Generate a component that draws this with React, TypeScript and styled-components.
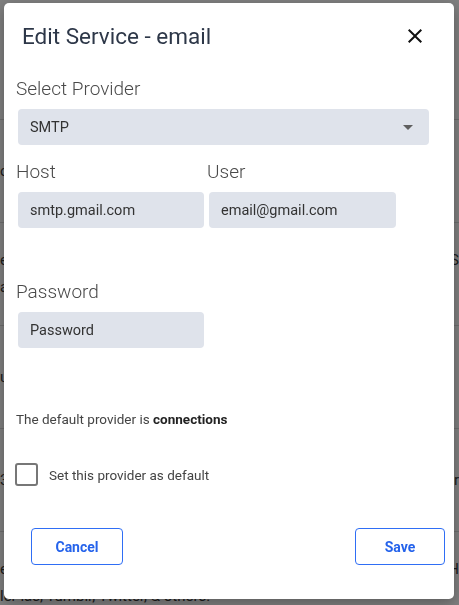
import React from "react";
import styled, { createGlobalStyle } from "styled-components";

const Global = createGlobalStyle`
  html, body { margin: 0; padding: 0; }
  body {
    background: #ffffff;
    font-family: Roboto, "Liberation Sans", Arial, sans-serif;
    overflow: hidden;
    width: 459px;
    height: 605px;
  }
  * { box-sizing: border-box; }
`;

/* ---------- page behind the dialog ---------- */
const Page = styled.div`
  padding-top: 17px;
  width: 459px;
  overflow: hidden;
`;

const PageRow = styled.div`
  height: 103px;
  border-bottom: 1px solid #dcdcdc;
  display: flex;
  align-items: center;
  justify-content: space-between;
  gap: 12px;
  color: #3a3a3a;
  font-size: 15px;
  line-height: 27px;
`;

const PageText = styled.div`
  white-space: nowrap;
`;

const PageLines = styled.div`
  display: flex;
  flex-direction: column;
  white-space: nowrap;
`;

const LineRow = styled.div`
  display: flex;
  justify-content: space-between;
  width: 459px;
`;

/* ---------- overlay + dialog ---------- */
const Overlay = styled.div`
  position: fixed;
  inset: 0;
  background: rgba(0, 0, 0, 0.5);
`;

const Dialog = styled.div`
  position: fixed;
  left: 4px;
  top: 3px;
  width: 450px;
  height: 596px;
  background: #ffffff;
  border-radius: 5px;
  box-shadow: 0 4px 14px rgba(0, 0, 0, 0.3);
  padding: 20px 9px 0 12px;
  display: flex;
  flex-direction: column;
`;

const Header = styled.div`
  display: flex;
  align-items: center;
  justify-content: space-between;
  padding-left: 6px;
  padding-right: 18px;
`;

const Title = styled.h2`
  margin: 0;
  font-size: 22.5px;
  line-height: 26px;
  font-weight: 400;
  color: #2d3748;
`;

const CloseButton = styled.button`
  border: 0;
  background: none;
  padding: 0;
  width: 24px;
  height: 24px;
  display: flex;
  color: #111;
  cursor: pointer;
`;

const Label = styled.div<{ $mt: number }>`
  margin-top: ${(p) => p.$mt}px;
  font-size: 19px;
  line-height: 22px;
  font-weight: 300;
  color: #4a4a4a;
`;

const Field = styled.div<{ $w: number; $mt?: number }>`
  margin-top: ${(p) => p.$mt ?? 9}px;
  margin-left: 2px;
  width: ${(p) => p.$w}px;
  height: 36px;
  background: #dfe3eb;
  border-radius: 4px;
  display: flex;
  align-items: center;
  justify-content: space-between;
  padding: 0 16px 0 12px;
  font-size: 14.5px;
  color: #333;
`;

const Caret = styled.span`
  width: 0;
  height: 0;
  border-left: 5px solid transparent;
  border-right: 5px solid transparent;
  border-top: 5px solid #5f5f5f;
`;

const Columns = styled.div`
  display: grid;
  grid-template-columns: 191px 191px;
  margin-top: 16px;
`;

const Column = styled.div`
  display: flex;
  flex-direction: column;
`;

const InfoText = styled.p`
  margin: 61px 0 0 0;
  font-size: 13.5px;
  line-height: 20px;
  color: #444;
  b { font-weight: 700; color: #222; }
`;

const CheckRow = styled.label`
  margin-top: 34px;
  display: flex;
  align-items: center;
  gap: 11px;
  margin-left: -1px;
  font-size: 13.5px;
  color: #444;
`;

const Box = styled.span`
  width: 23px;
  height: 23px;
  border: 2px solid #777;
  border-radius: 3px;
  display: inline-block;
`;

const Footer = styled.div`
  margin-top: 42px;
  display: flex;
  justify-content: space-between;
  padding-left: 15px;
`;

const OutlineButton = styled.button<{ $w: number }>`
  width: ${(p) => p.$w}px;
  height: 37px;
  border: 1px solid #2f6ef5;
  border-radius: 4px;
  background: #fff;
  color: #2563eb;
  font-family: Roboto, "Liberation Sans", Arial, sans-serif;
  font-size: 14px;
  font-weight: 700;
  cursor: pointer;
`;

export default function App() {
  return (
    <>
      <Global />
      <Page>
        <PageRow />
        <PageRow>
          <PageText>o</PageText>
        </PageRow>
        <PageRow>
          <PageLines>
            <LineRow>
              <span>e</span>
              <span>S</span>
            </LineRow>
            <span>a</span>
          </PageLines>
        </PageRow>
        <PageRow>
          <PageText>u</PageText>
        </PageRow>
        <PageRow>
          <PageText>3</PageText>
          <PageText>or</PageText>
        </PageRow>
        <PageRow>
          <PageLines>
            <LineRow>
              <span>e</span>
              <span>H</span>
            </LineRow>
            <span>ler ias, Tumblr, Twitter, &amp; others.</span>
          </PageLines>
        </PageRow>
      </Page>
      <Overlay />
      <Dialog>
        <Header>
          <Title>Edit Service - email</Title>
          <CloseButton aria-label="Close">
            <svg width="24" height="24" viewBox="0 0 24 24" fill="currentColor">
              <path d="M19 6.41L17.59 5 12 10.59 6.41 5 5 6.41 10.59 12 5 17.59 6.41 19 12 13.41 17.59 19 19 17.59 13.41 12z" />
            </svg>
          </CloseButton>
        </Header>
        <Label $mt={29}>Select Provider</Label>
        <Field $w={411} $mt={9}>
          <span>SMTP</span>
          <Caret />
        </Field>
        <Columns>
          <Column>
            <Label $mt={0}>Host</Label>
            <Field $w={186}>smtp.gmail.com</Field>
          </Column>
          <Column>
            <Label $mt={0}>User</Label>
            <Field $w={187}>email@gmail.com</Field>
          </Column>
        </Columns>
        <Label $mt={53}>Password</Label>
        <Field $w={186}>Password</Field>
        <InfoText>
          The default provider is <b>connections</b>
        </InfoText>
        <CheckRow>
          <Box />
          <span>Set this provider as default</span>
        </CheckRow>
        <Footer>
          <OutlineButton $w={92}>Cancel</OutlineButton>
          <OutlineButton $w={90}>Save</OutlineButton>
        </Footer>
      </Dialog>
    </>
  );
}
